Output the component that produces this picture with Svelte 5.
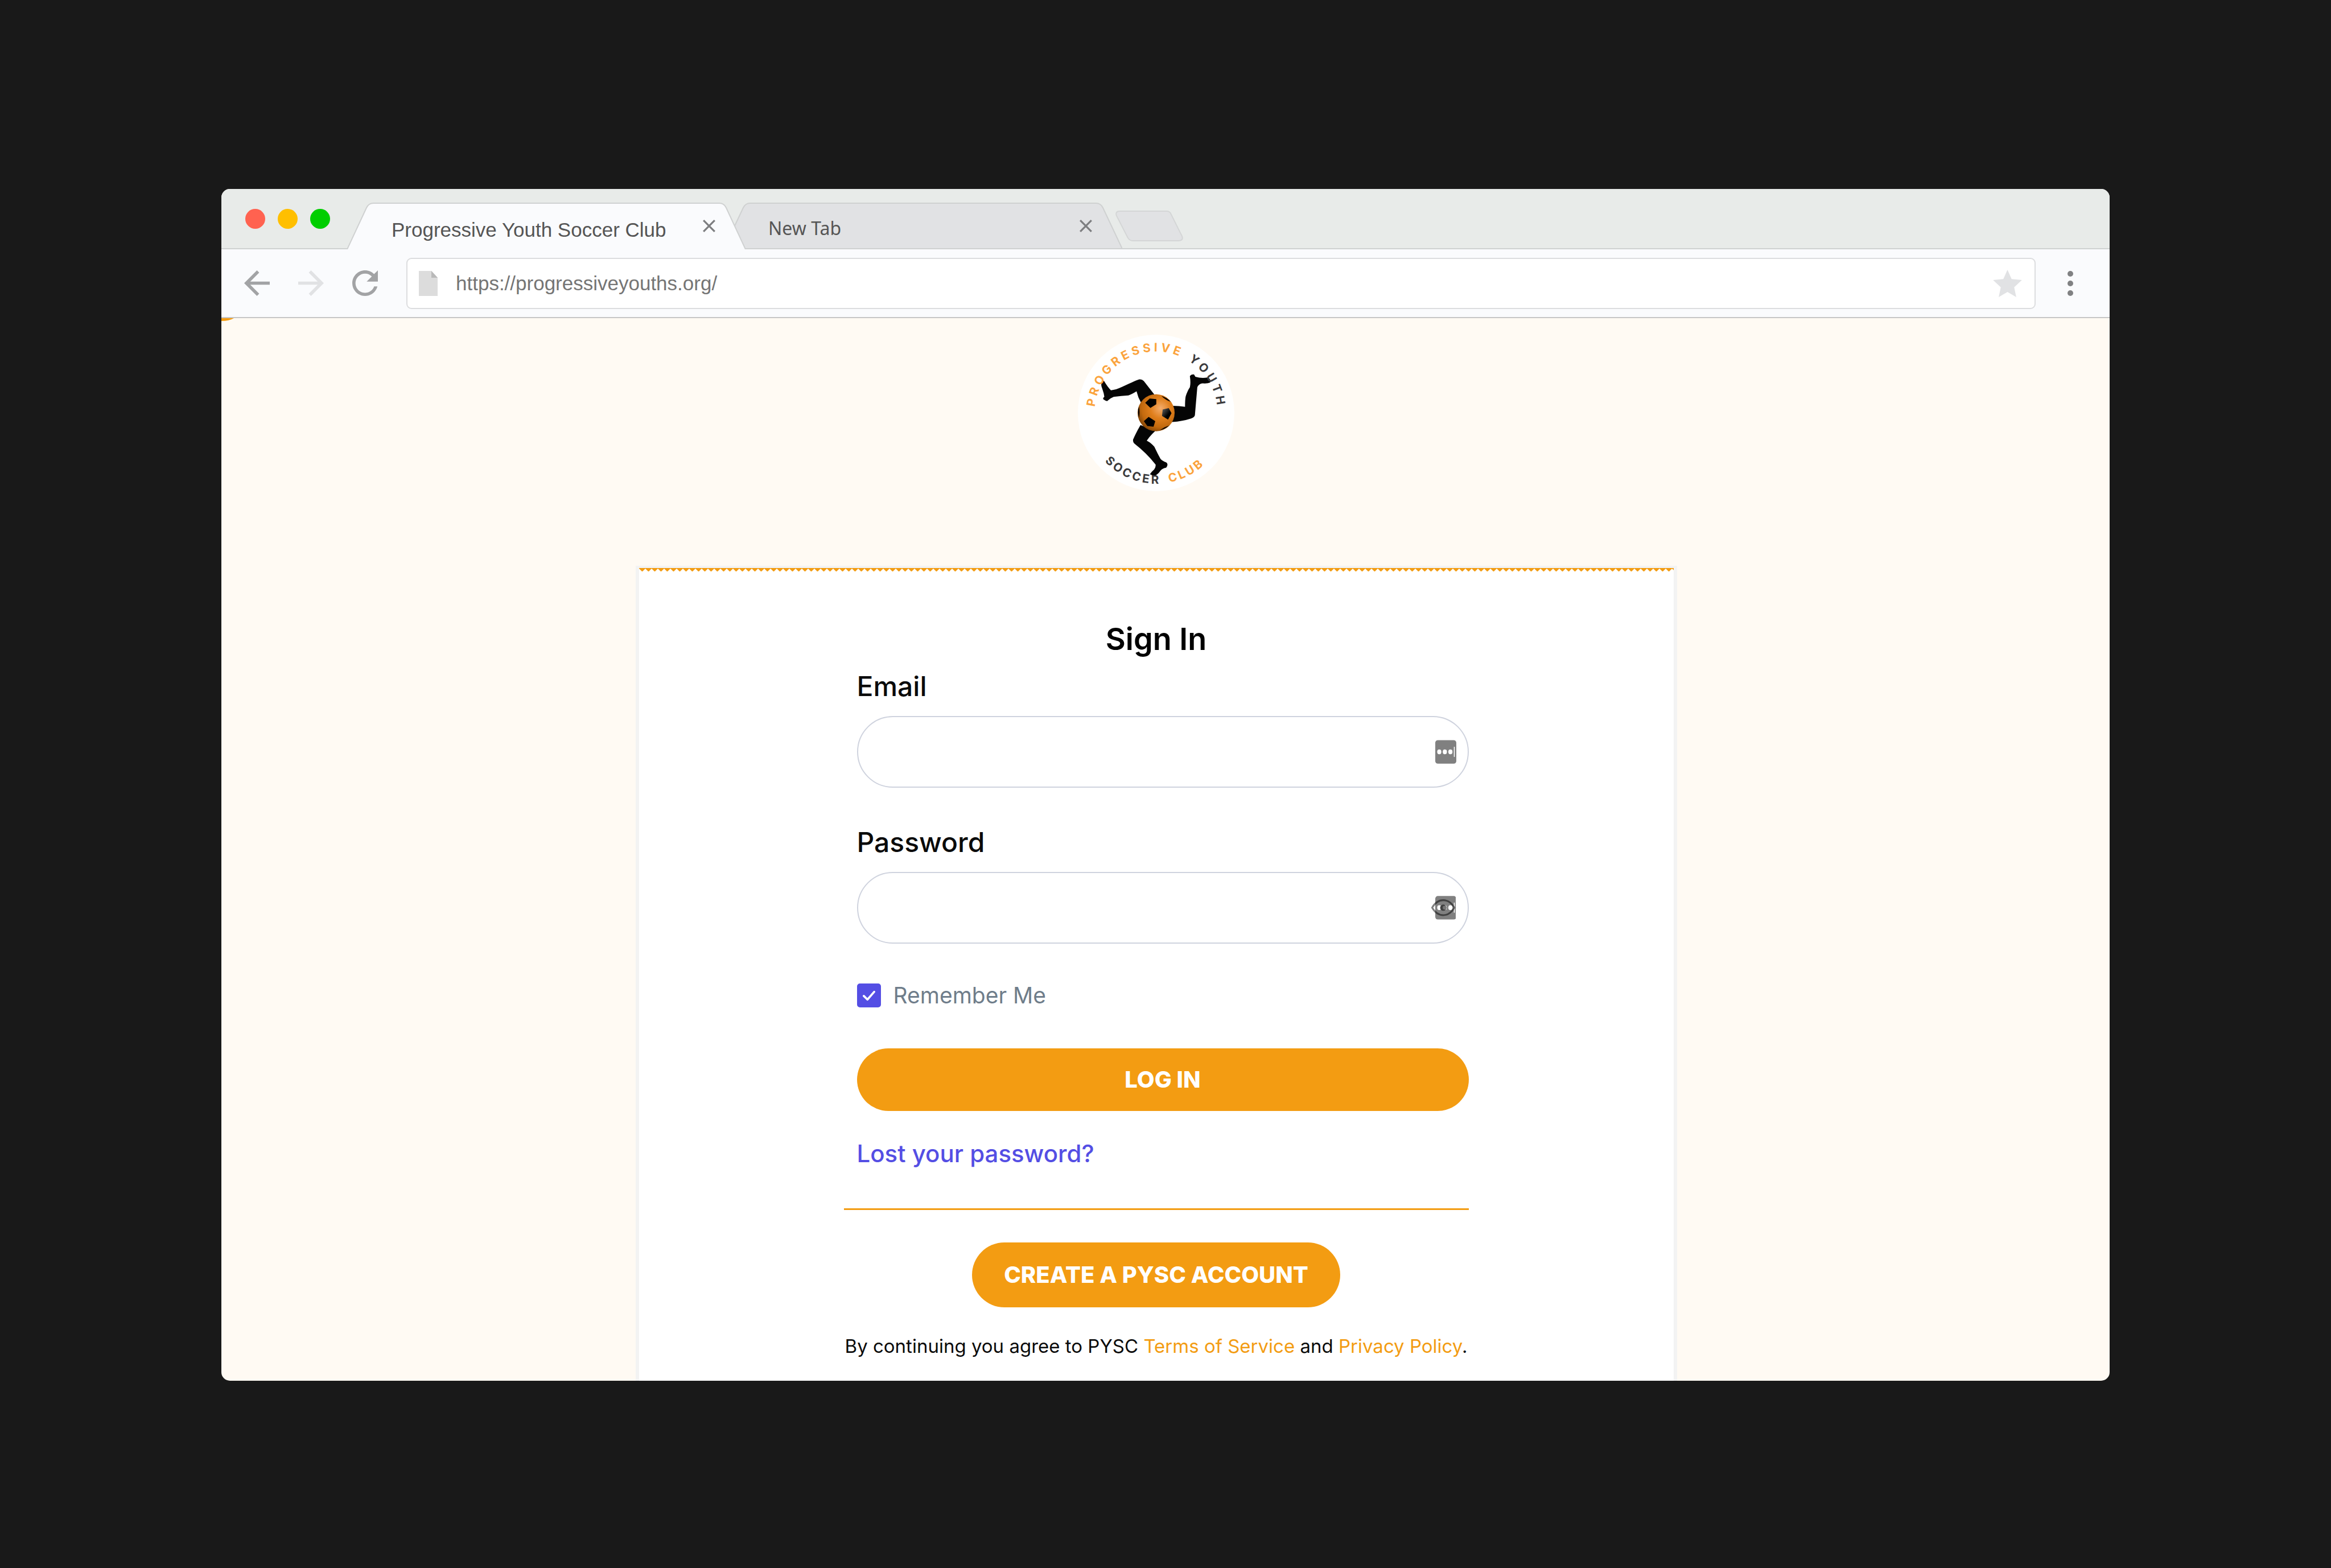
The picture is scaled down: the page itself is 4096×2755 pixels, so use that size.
<script lang="ts">
  const TABS = [
    { title: 'Progressive Youth Soccer Club', active: true },
    { title: 'New Tab', active: false },
  ]

  const LIGHTS = ['close', 'minimize', 'zoom']

  let url = $state('https://progressiveyouths.org/')
  let email = $state('')
  let password = $state('')
  let remember = $state(true)
  let showPassword = $state(false)
</script>

<div class="desktop">
  <div class="browser">
    <div class="tab-strip">
      <div class="lights">
        {#each LIGHTS as name}
          <button class="light {name}" aria-label={name}></button>
        {/each}
      </div>

      {#each TABS as { title, active }}
        <div class="tab" class:active>
          <svg class="tab-shape" viewBox="0 0 700 82" aria-hidden="true">
            {#if active}
              <path d="M0 82 L34 9 Q38 1 46 1 H654 Q662 1 666 9 L700 82" />
            {:else}
              <path d="M0 81 L34 9 Q38 1 46 1 H654 Q662 1 666 9 L700 81 Z" />
            {/if}
          </svg>
          <button class="tab-title">{title}</button>
          <button class="tab-close" aria-label="Close tab">
            <svg viewBox="0 0 22 22"><path d="M2 2 L20 20 M20 2 L2 20" /></svg>
          </button>
        </div>
      {/each}

      <button class="new-tab" aria-label="New tab">
        <svg viewBox="0 0 117 53">
          <path d="M8 1 H88 Q94 1 96 6 L115 44 Q118 52 109 52 H30 Q24 52 21 46 L2 9 Q-1 1 8 1 Z" />
        </svg>
      </button>
    </div>

    <div class="toolbar">
      <button class="nav" aria-label="Back">
        <svg viewBox="4 4 16 16"><path d="M20 11H7.83l5.59-5.59L12 4l-8 8 8 8 1.41-1.41L7.83 13H20v-2z" /></svg>
      </button>
      <button class="nav faded" aria-label="Forward">
        <svg viewBox="4 4 16 16"><path d="M12 4l-1.41 1.41L16.17 11H4v2h12.17l-5.58 5.59L12 20l8-8z" /></svg>
      </button>
      <button class="nav" aria-label="Reload">
        <svg viewBox="4 4 16 16"><path d="M17.65 6.35C16.2 4.9 14.21 4 12 4c-4.42 0-7.99 3.58-7.99 8s3.57 8 7.99 8c3.73 0 6.84-2.55 7.73-6h-2.08c-.82 2.33-3.04 4-5.65 4-3.31 0-6-2.69-6-6s2.69-6 6-6c1.66 0 3.14.69 4.22 1.78L13 11h7V4l-2.35 2.35z" /></svg>
      </button>

      <div class="address">
        <svg class="doc" viewBox="0 0 33 44" aria-hidden="true">
          <path d="M0 0 H22 L33 12 V44 H0 Z" fill="#dcdcdc" />
          <path d="M22 0 L33 12 H22 Z" fill="#b9b9b9" />
        </svg>
        <input type="text" aria-label="Address" bind:value={url} />
        <button class="star" aria-label="Bookmark">
          <svg viewBox="0 0 56 53">
            <path d="M28 0 L36 18 L56 20 L41 34 L45 53 L28 43 L11 53 L15 34 L0 20 L20 18 Z" />
          </svg>
        </button>
      </div>

      <button class="menu" aria-label="Menu">
        <svg viewBox="0 0 22 46">
          <circle cx="11" cy="6" r="5" />
          <circle cx="11" cy="23" r="5" />
          <circle cx="11" cy="40" r="5" />
        </svg>
      </button>
    </div>

    <main class="page">
      <svg class="progress" viewBox="0 0 22 5" aria-hidden="true">
        <path d="M0 0 H22 Q14 5 0 5 Z" />
      </svg>

      <svg class="logo" viewBox="93 46 904 904" role="img" aria-label="Progressive Youth Soccer Club">
        <defs>
          <radialGradient id="ball" cx="0.62" cy="0.38" r="0.68">
            <stop offset="0" stop-color="#f3ac6c" />
            <stop offset="0.4" stop-color="#e07f1c" />
            <stop offset="0.75" stop-color="#c2690e" />
            <stop offset="1" stop-color="#7d4206" />
          </radialGradient>
          <linearGradient id="shine" x1="0" y1="0" x2="1" y2="1">
            <stop offset="0.1" stop-color="#555" />
            <stop offset="0.6" stop-color="#000" />
          </linearGradient>
          <path id="arc-top" d="M190 498 A355 355 0 0 1 900 498" />
          <path id="arc-bottom" d="M137 498 A408 408 0 0 0 953 498" />
        </defs>
        <circle cx="545" cy="498" r="452" fill="#fff" />
        <g fill="#050505">
          <path d="M535 392 L474 314 Q464 303 450 304 Q436 306 350 347 Q310 366 284 367 Q266 350 244 313 Q232 308 229 325 Q226 340 234 358 Q244 385 246 405 Q236 412 240 419 Q252 428 262 430 Q280 412 300 405 Q345 400 385 397 Q405 390 432 373 Q440 408 457 437 Z" />
          <path d="M638 457 Q680 458 712 463 Q712 420 716 402 Q726 370 740 350 Q746 325 740 285 Q748 274 764 276 L772 289 Q808 300 842 293 Q862 300 858 322 Q840 330 815 327 Q792 328 783 350 Q776 430 769 512 Q764 526 745 531 Q700 546 636 551 Z" />
          <path d="M455 568 Q430 610 412 652 Q410 668 422 677 Q490 730 542 796 Q544 812 534 824 Q518 838 509 852 L532 862 Q556 856 570 832 Q580 818 603 814 Q618 796 604 784 Q582 776 571 764 Q552 730 535 694 Q518 672 491 658 Q510 630 540 602 Z" />
        </g>
        <circle cx="545" cy="497" r="107" fill="url(#ball)" />
        <path d="M482 440 L508 415 L546 418 L546 448 L512 469 Z M474 546 L502 521 L540 546 L530 578 L494 574 Z" />
        <path d="M583 478 L618 470 L634 500 L614 537 L579 515 Z" fill="url(#shine)" />
        <path d="M575 399 Q610 410 630 434 Q600 424 575 399 Z M446 460 Q436 490 446 525 Q452 495 446 460 Z M566 598 Q600 590 620 570 Q590 580 566 598 Z" />
        <g class="logo-text">
          <text class="orange"><textPath href="#arc-top" startOffset="34">PROGRESSIVE</textPath></text>
          <text><textPath href="#arc-top" startOffset="753">YOUTH</textPath></text>
          <text class="tight"><textPath href="#arc-bottom" startOffset="308">SOCCER</textPath></text>
          <text class="orange tight"><textPath href="#arc-bottom" startOffset="718">CLUB</textPath></text>
        </g>
      </svg>

      <section class="card">
        <svg class="zigzag" aria-hidden="true">
          <defs>
            <pattern id="teeth" width="11" height="6" patternUnits="userSpaceOnUse">
              <path d="M0 0 H11 V1 L6 6 H5 L0 1 Z" fill="#f39c12" />
            </pattern>
          </defs>
          <rect width="100%" height="6" fill="url(#teeth)" />
        </svg>

        <div class="column">
          <h1>Sign In</h1>

          <form onsubmit={(e) => e.preventDefault()}>
            <label class="label" for="email">Email</label>
            <div class="field">
              <input id="email" type="email" bind:value={email} />
              <svg class="field-icon" viewBox="338 1075 144 136" aria-hidden="true">
                <rect x="361" y="1076" width="121" height="135" rx="15" fill="#808080" />
                <g fill="#fff">
                  <ellipse cx="384" cy="1143" rx="12" ry="14" />
                  <ellipse cx="416" cy="1143" rx="12" ry="14" />
                  <ellipse cx="448" cy="1143" rx="12" ry="14" />
                  <rect x="468" y="1114" width="5" height="58" />
                </g>
              </svg>
            </div>

            <label class="label" for="password">Password</label>
            <div class="field">
              <input id="password" type={showPassword ? 'text' : 'password'} bind:value={password} />
              <button
                type="button"
                class="field-icon"
                aria-label={showPassword ? 'Hide password' : 'Show password'}
                onclick={() => (showPassword = !showPassword)}
              >
                <svg viewBox="338 1075 144 136">
                  <rect x="361" y="1076" width="121" height="135" rx="15" fill="#808080" />
                  <g fill="#fff">
                    <ellipse cx="384" cy="1143" rx="12" ry="14" />
                    <ellipse cx="416" cy="1143" rx="12" ry="14" />
                    <ellipse cx="448" cy="1143" rx="12" ry="14" />
                    <rect x="468" y="1114" width="5" height="58" />
                  </g>
                  <path d="M343 1143 Q368 1100 407 1100 Q446 1100 471 1143 Q446 1186 407 1186 Q368 1186 343 1143 Z" fill="none" stroke="#000" stroke-opacity="0.5" stroke-width="10" />
                  <circle cx="407" cy="1143" r="18" fill="#404040" />
                  <circle cx="415" cy="1143" r="11" fill="#777" />
                </svg>
              </button>
            </div>

            <label class="remember">
              <span class="box">
                <input type="checkbox" bind:checked={remember} />
                <svg viewBox="0 0 46 46" aria-hidden="true"><path d="M13 24 L20 31 L33 16" /></svg>
              </span>
              Remember Me
            </label>

            <button type="submit" class="pill login">LOG IN</button>
            <a class="lost" href="#lost">Lost your password?</a>
          </form>

          <hr />

          <button class="pill create">CREATE A PYSC ACCOUNT</button>

          <p class="terms">
            By continuing you agree to PYSC <a href="#terms">Terms of Service</a> and <a href="#privacy">Privacy Policy</a>.
          </p>
        </div>
      </section>
    </main>
  </div>
</div>

<style>
  :global(body) {
    background: #191919;
  }

  .desktop {
    padding: 332px 389px 320px;
  }

  .browser {
    border-radius: 15px;
    overflow: hidden;
    background: #fffaf3;
  }

  button {
    padding: 0;
    border: none;
    background: none;
    font-family: inherit;
    cursor: pointer;
  }

  input {
    box-sizing: border-box;
    margin: 0;
    font-family: inherit;
  }

  svg {
    display: block;
  }

  /* ── Tabs ── */
  .tab-strip {
    display: flex;
    align-items: center;
    height: 106px;
    box-sizing: border-box;
    padding-left: 42px;
    background: #e8ebe9;
    border-bottom: 2px solid #cfd1d1;
    font-family: "Liberation Sans", Arial, sans-serif;
  }

  .lights {
    display: flex;
    gap: 22px;
    margin-right: 30px;
  }

  .light {
    width: 35px;
    height: 35px;
    border-radius: 50%;
  }
  .close    { background: #ff6250; }
  .minimize { background: #ffbf00; }
  .zoom     { background: #00ce00; }

  .tab {
    position: relative;
    display: flex;
    align-items: center;
    justify-content: space-between;
    align-self: flex-end;
    flex-shrink: 0;
    width: 700px;
    height: 82px;
    box-sizing: border-box;
    margin-bottom: -2px;
    padding: 0 52px 0 78px;
    font-family: "Noto Sans", sans-serif;
    font-size: 32px;
  }

  .tab + .tab {
    margin-left: -38px;
  }

  .tab.active {
    z-index: 1;
    font-family: "Liberation Sans", Arial, sans-serif;
    font-size: 35px;
  }

  .tab-shape {
    position: absolute;
    inset: 0;
    fill: #e1e2e4;
    stroke: #cfd1d1;
    stroke-width: 2;
  }

  .active .tab-shape {
    fill: #fafbfd;
  }

  .tab-title {
    position: relative;
    padding-top: 8px;
    font-size: inherit;
    line-height: 40px;
    color: #555;
  }

  .active .tab-title {
    padding-top: 14px;
  }

  .tab-close {
    position: relative;
  }

  .tab-close svg {
    width: 24px;
    height: 24px;
    stroke: #7d7e80;
    stroke-width: 3;
  }

  .new-tab {
    margin: 26px 0 0 -12px;
    z-index: 1;
  }

  .new-tab svg {
    width: 119px;
    height: 54px;
    fill: #e1e2e4;
    stroke: #d4d6d6;
    stroke-width: 2;
  }

  /* ── Toolbar ── */
  .toolbar {
    display: flex;
    align-items: center;
    gap: 50px;
    height: 121px;
    box-sizing: border-box;
    padding: 0 58px 0 40px;
    background: #fafbfd;
    border-bottom: 2px solid #c6c6c6;
    font-family: "Liberation Sans", Arial, sans-serif;
  }

  .nav svg {
    width: 45px;
    height: 45px;
    fill: #a2a3a5;
  }

  .nav.faded svg {
    fill: #e1e2e4;
  }

  .address {
    flex: 1;
    display: flex;
    align-items: center;
    height: 90px;
    box-sizing: border-box;
    padding: 0 22px 0 20px;
    background: #fff;
    border: 2px solid #dcdddf;
    border-radius: 9px;
  }

  .address input {
    flex: 1;
    padding: 0 32px;
    border: none;
    outline: none;
    background: none;
    font-size: 35px;
    line-height: 40px;
    color: #757575;
  }

  .doc {
    width: 33px;
    height: 44px;
  }

  .star svg {
    width: 51px;
    height: 48px;
    fill: #e1e2e4;
  }

  .menu svg {
    width: 22px;
    height: 46px;
    fill: #808183;
  }

  /* ── Page ── */
  .page {
    position: relative;
    display: flex;
    flex-direction: column;
    align-items: center;
    gap: 131px;
    padding: 29px 33px 0 0;
    font-family: Inter, sans-serif;
  }

  .progress {
    position: absolute;
    left: 0;
    top: 0;
    width: 22px;
    height: 5px;
    fill: #f39c12;
  }

  .logo {
    width: 275px;
    height: 275px;
  }

  .logo-text {
    font-size: 68px;
    font-weight: 700;
    letter-spacing: 18px;
    fill: #3a3a3c;
  }

  .tight {
    letter-spacing: 13px;
  }

  .orange {
    fill: #fba33c;
  }

  .card {
    display: flex;
    flex-direction: column;
    align-items: center;
    width: 1830px;
    max-width: 100%;
    box-sizing: border-box;
    background: #fff;
    border: 6px solid #f3f3f3;
    border-top-width: 4px;
    border-bottom: none;
  }

  .zigzag {
    width: 100%;
    height: 6px;
  }

  .column {
    display: flex;
    flex-direction: column;
    align-items: center;
    width: 1098px;
    max-width: 100%;
    padding: 83px 0 37px;
  }

  h1 {
    margin: 0 0 15px;
    font-size: 54px;
    font-weight: 600;
    line-height: 72px;
    color: #000;
  }

  form {
    display: flex;
    flex-direction: column;
    align-self: stretch;
    padding-left: 23px;
  }

  .label {
    margin-bottom: 20px;
    font-size: 48px;
    font-weight: 500;
    line-height: 64px;
    color: #0a0a0a;
  }

  .field {
    position: relative;
    margin-bottom: 64px;
  }

  .field input {
    display: block;
    width: 100%;
    height: 126px;
    padding: 0 80px 0 48px;
    border: 2px solid #cfd3de;
    border-radius: 63px;
    background: #fff;
    font-size: 39px;
  }

  .field-icon {
    position: absolute;
    right: 22px;
    top: 42px;
    width: 44px;
    height: 42px;
  }

  .remember {
    display: flex;
    align-items: center;
    gap: 22px;
    margin: 6px 0 72px;
    font-size: 39px;
    line-height: 42px;
    color: #6f7d8a;
  }

  .box {
    display: grid;
    width: 42px;
    height: 42px;
  }

  .box input,
  .box svg {
    grid-area: 1 / 1;
    width: 42px;
    height: 42px;
  }

  .box input {
    appearance: none;
    border: 2px solid #544ee4;
    border-radius: 5px;
  }

  .box input:checked {
    background: #544ee4;
  }

  .box svg {
    fill: none;
    stroke: #fff;
    stroke-width: 4;
    stroke-linecap: round;
    stroke-linejoin: round;
    pointer-events: none;
  }

  .pill {
    border-radius: 57px;
    background: #f39c12;
    color: #fff;
    font-weight: 800;
    font-size: 40px;
    line-height: 56px;
  }

  .login {
    height: 110px;
    margin-bottom: 45px;
  }

  .lost {
    align-self: flex-start;
    font-size: 42px;
    font-weight: 500;
    line-height: 60px;
    color: #544ee4;
    text-decoration: none;
  }

  hr {
    align-self: stretch;
    height: 3px;
    margin: 66px 0 57px;
    border: none;
    background: #f39c12;
  }

  .create {
    height: 114px;
    padding: 0 56px;
  }

  .terms {
    margin: 44px 0 0;
    font-size: 33px;
    line-height: 48px;
    color: #0a0a0a;
    white-space: nowrap;
  }

  .terms a {
    color: #f39c12;
    text-decoration: none;
  }
</style>
